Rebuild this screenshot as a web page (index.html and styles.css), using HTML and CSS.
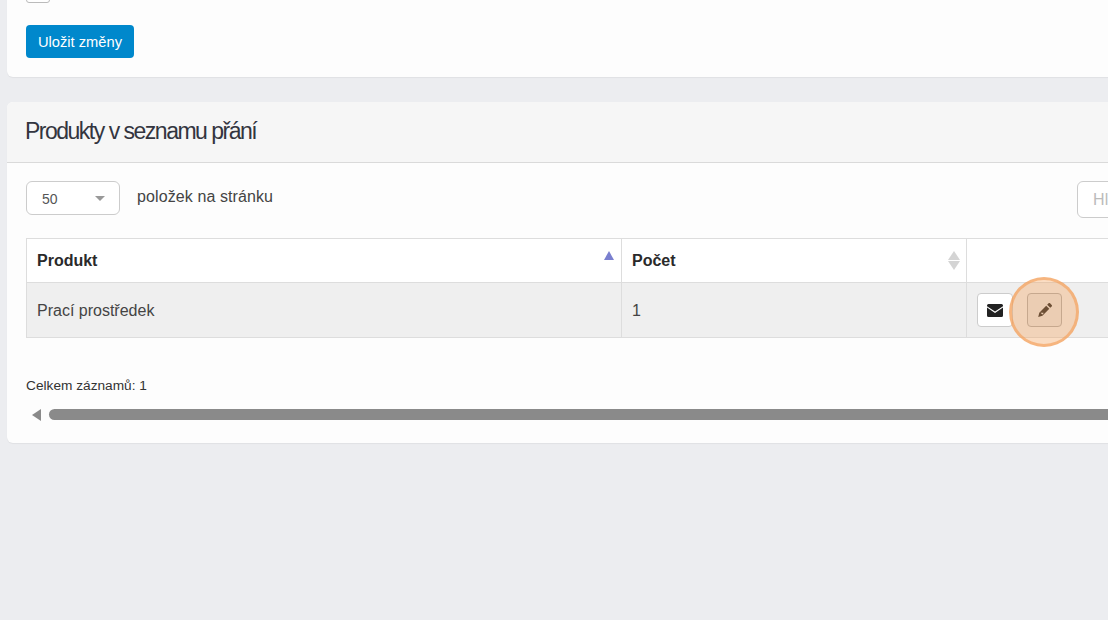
FILE: index.html
```html
<!DOCTYPE html>
<html lang="cs">
<head>
<meta charset="utf-8">
<title>Produkty v seznamu přání</title>
<link rel="stylesheet" href="styles.css">
</head>
<body>
<div class="page">
  <section class="card card-top">
    <div class="checkbox"></div>
    <button class="btn-save">Uložit změny</button>
  </section>
  <section class="card card-list">
    <header class="card-head"><h2>Produkty v seznamu přání</h2></header>
    <div class="card-body">
      <div class="toolbar">
        <div class="per-page">
          <div class="select"><span>50</span><i class="caret"></i></div>
          <span class="per-label">položek na stránku</span>
        </div>
        <div class="search">Hledat</div>
      </div>
      <table class="grid">
        <thead>
          <tr>
            <th class="col-product">Produkt<i class="sort-asc"></i></th>
            <th class="col-count">Počet<span class="sort-both"><i class="up"></i><i class="down"></i></span></th>
            <th class="col-actions"></th>
          </tr>
        </thead>
        <tbody>
          <tr>
            <td>Prací prostředek</td>
            <td>1</td>
            <td class="actions">
              <button class="btn-icon" aria-label="E-mail">
                <svg width="16" height="13" viewBox="0 0 16 13"><path fill="#222" d="M1.500 0h13A1.500 1.500 0 0 1 16 1.500v.7L8 7.600 0 2.200v-.7A1.500 1.500 0 0 1 1.500 0z"/><path fill="#222" d="M0 3.600V11.500A1.500 1.500 0 0 0 1.500 13h13a1.500 1.500 0 0 0 1.500-1.500V3.600L8 9z"/></svg>
              </button>
              <span class="highlight-wrap">
                <button class="btn-icon btn-edit" aria-label="Upravit">
                  <svg width="14" height="14" viewBox="0 0 13 13"><path fill="#222" d="M9.800.3a1 1 0 0 1 1.400 0l1.500 1.500a1 1 0 0 1 0 1.400l-1.300 1.300-2.900-2.900zM7.600 2.500l2.900 2.900-6.400 6.400L.2 13 1.200 9zM2.400 9.100l1.600 1.600 1-1 .1-.7z"/></svg>
                </button>
                <i class="spot"></i>
              </span>
            </td>
          </tr>
        </tbody>
      </table>
      <p class="total">Celkem záznamů: 1</p>
      <div class="scroller"><i class="arrow"></i><div class="thumb"></div></div>
    </div>
  </section>
</div>
</body>
</html>
```

FILE: styles.css
```css
* { box-sizing: border-box; }
html, body { margin: 0; height: 100%; overflow: hidden; }
body {
  background: #ecedf0;
  font-family: "Liberation Sans", Arial, sans-serif;
  color: #333;
  font-size: 14px;
}
.page {
  width: 1400px;
  margin-top: -20px;
  padding-left: 7px;
}
.card {
  background: #fdfdfd;
  border-radius: 6px;
  box-shadow: 0 1px 1px rgba(0, 0, 0, .05);
}
.card-top {
  height: 97px;
  padding-left: 19px;
  margin-bottom: 25px;
  display: flex;
  flex-direction: column;
  align-items: flex-start;
}
.checkbox {
  width: 24px;
  height: 23px;
  border: 1px solid #bbb;
  border-radius: 3px;
  background: #fff;
}
.btn-save {
  margin-top: 22px;
  width: 108px;
  height: 33px;
  border: 0;
  border-radius: 4px;
  background: #0088cc;
  color: #fff;
  font: 14.700px "Liberation Sans", Arial, sans-serif;
  padding: 0;
}
.card-list { height: 341px; }
.card-head {
  height: 61px;
  background: #f6f6f6;
  border-bottom: 1px solid #dadada;
  border-radius: 6px 6px 0 0;
  padding: 0 0 2px 18px;
  display: flex;
  align-items: center;
}
.card-head h2 {
  margin: 0;
  font-size: 23px;
  font-weight: 400;
  letter-spacing: -1.500px;
  color: #33353f;
}
.card-body { padding: 0 0 0 19px; }
.toolbar {
  height: 75px;
  padding-top: 18px;
  display: flex;
}
.per-page { display: flex; align-items: flex-start; }
.select {
  width: 94px;
  height: 34px;
  border: 1px solid #ccc;
  border-radius: 6px;
  background: #fff;
  display: flex;
  align-items: center;
  justify-content: space-between;
  padding: 1px 14px 0 15px;
  color: #555;
}
.caret {
  width: 0;
  height: 0;
  border-left: 5px solid transparent;
  border-right: 5px solid transparent;
  border-top: 5px solid #999;
}
.per-label {
  margin-left: 17px;
  font-size: 16px;
  letter-spacing: .1px;
  line-height: 32px;
  color: #444;
}
.search {
  margin-left: 804px;
  width: 240px;
  height: 37px;
  border: 1px solid #ccc;
  border-radius: 6px;
  background: #fff;
  color: #bbb;
  font-size: 16px;
  line-height: 35px;
  padding-left: 15px;
}
.grid {
  width: 1330px;
  table-layout: fixed;
  border-collapse: collapse;
}
.grid th, .grid td {
  border: 1px solid #ddd;
  padding: 0 10px;
  text-align: left;
}
.grid th {
  height: 44px;
  position: relative;
  font-size: 16px;
  font-weight: 700;
  color: #2a2a2a;
  background: #fff;
}
.grid td {
  height: 55px;
  padding-top: 2px;
  background: #efefef;
  color: #444;
  font-size: 16px;
}
.col-product { width: 595px; }
.col-count { width: 345px; }
.sort-asc {
  position: absolute;
  right: 7px;
  top: 12px;
  border-left: 5px solid transparent;
  border-right: 5px solid transparent;
  border-bottom: 9px solid #7a7fcf;
}
.sort-both {
  position: absolute;
  right: 6px;
  top: 12px;
  display: flex;
  flex-direction: column;
  gap: 1px;
}
.sort-both .up, .sort-both .down {
  border-left: 6px solid transparent;
  border-right: 6px solid transparent;
}
.sort-both .up { border-bottom: 9px solid #d4d4d4; }
.sort-both .down { border-top: 9px solid #d4d4d4; }
.grid td.actions {
  padding: 0 0 0 10px;
  white-space: nowrap;
  font-size: 0;
}
.btn-icon {
  width: 36px;
  height: 34px;
  padding: 0;
  border: 1px solid #ccc;
  border-radius: 4px;
  background: #fff;
  display: inline-flex;
  align-items: center;
  justify-content: center;
  vertical-align: middle;
}
.highlight-wrap {
  position: relative;
  display: inline-block;
  margin-left: 14px;
  vertical-align: middle;
  line-height: 0;
}
.btn-edit {
  width: 35px;
  background: #e6e6e6;
  border-color: #adadad;
}
.spot {
  position: absolute;
  left: -18px;
  top: -16px;
  width: 70px;
  height: 70px;
  border-radius: 50%;
  background: rgba(244, 160, 90, .36);
  border: 3px solid rgba(244, 160, 90, .65);
}
.total {
  margin: 40px 0 0;
  font-size: 13.700px;
  line-height: 16px;
  color: #333;
}
.scroller {
  margin-top: 15px;
  padding-left: 6px;
  height: 12px;
  display: flex;
  align-items: flex-start;
}
.arrow {
  width: 0;
  height: 0;
  border-top: 6px solid transparent;
  border-bottom: 6px solid transparent;
  border-right: 9px solid #8a8a8a;
}
.thumb {
  margin-left: 8px;
  width: 1300px;
  height: 11px;
  border-radius: 6px;
  background: #8a8a8a;
}
```
